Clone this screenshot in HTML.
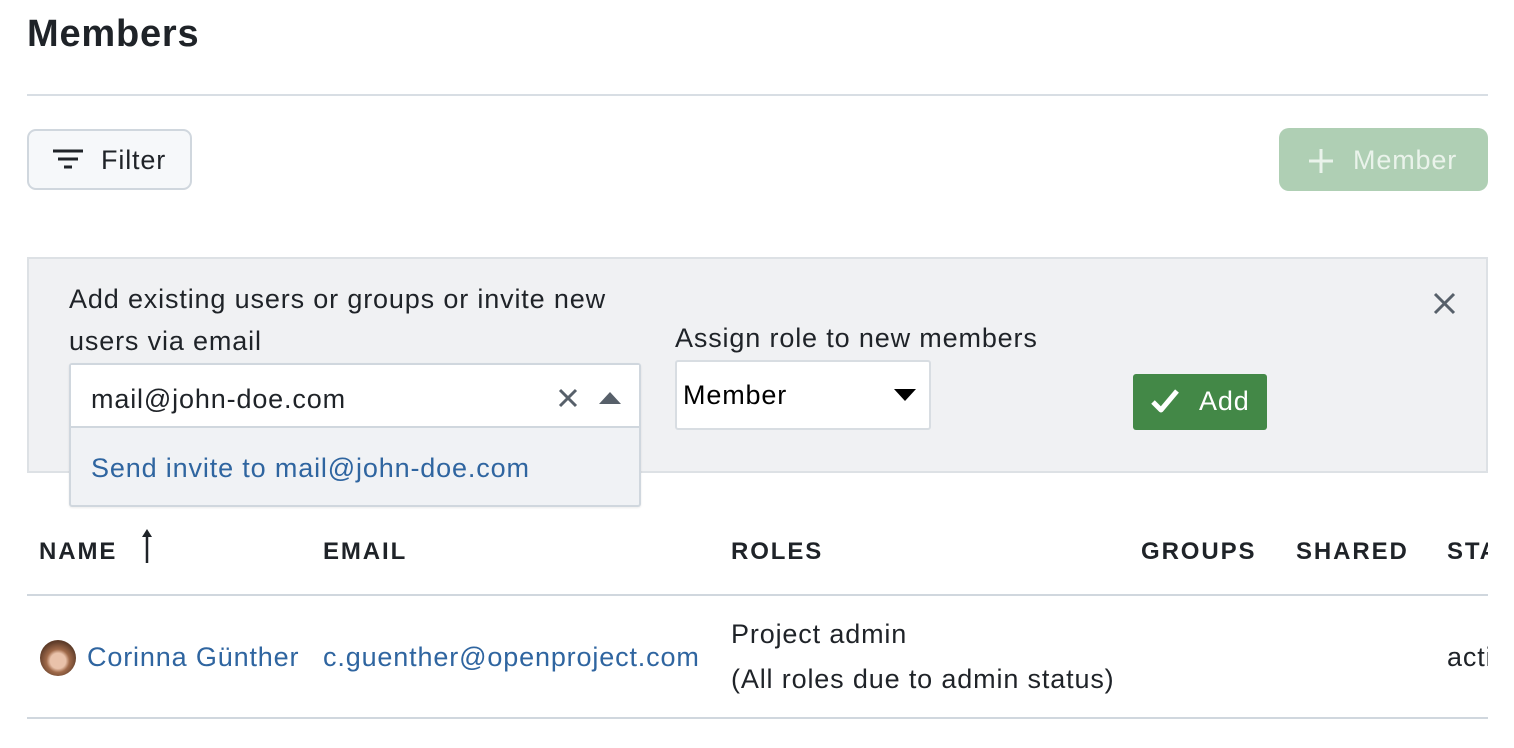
<!DOCTYPE html>
<html><head><meta charset="utf-8"><style>
*{margin:0;padding:0;box-sizing:border-box}
body{width:1514px;height:748px;background:#fff;font-family:"Liberation Sans",Arial,sans-serif;color:#1f2328;position:relative;overflow:hidden}
.a{position:absolute;white-space:nowrap}
.t{font-size:27px;line-height:30px;letter-spacing:0.85px}
.h{font-size:24px;font-weight:bold;line-height:28px;letter-spacing:1.9px}
.blue{color:#2f65a0}
</style></head><body>
<div class="a" style="left:27px;top:12px;font-size:38px;font-weight:bold;line-height:44px;letter-spacing:0.8px">Members</div>
<div class="a" style="left:27px;top:94px;width:1461px;height:2px;background:#d8dee4"></div>

<div class="a" style="left:27px;top:129px;width:165px;height:61px;border:2px solid #d0d7de;border-radius:9px;background:#f6f8fa"></div>
<svg class="a" style="left:52px;top:149px" width="32" height="22" viewBox="0 0 32 22"><path d="M1 2h30M6 10h20M12 18h8" stroke="#1f2328" stroke-width="3"/></svg>
<div class="a t" style="left:101px;top:145px">Filter</div>

<div class="a" style="left:1279px;top:128px;width:209px;height:63px;border-radius:10px;background:#afcfb4"></div>
<svg class="a" style="left:1308px;top:148px" width="26" height="26" viewBox="0 0 26 26"><path d="M13 1v24M1 13h24" stroke="#eaf3eb" stroke-width="3"/></svg>
<div class="a t" style="left:1353px;top:145px;color:#eaf3eb">Member</div>

<div class="a" style="left:27px;top:257px;width:1461px;height:216px;background:#f0f1f3;border:2px solid #dde1e5"></div>
<div class="a t" style="left:69px;top:284px">Add existing users or groups or invite new</div>
<div class="a t" style="left:69px;top:326px">users via email</div>
<div class="a" style="left:69px;top:363px;width:572px;height:144px;border:2px solid #d0d7de;border-radius:3px;background:#f0f2f5;box-shadow:0 1px 2px rgba(0,0,0,0.08)"></div>
<div class="a" style="left:71px;top:365px;width:568px;height:63px;background:#fff;border-bottom:2px solid #d0d7de"></div>
<div class="a t" style="left:91px;top:384px">mail@john-doe.com</div>
<svg class="a" style="left:558px;top:388px" width="20" height="20" viewBox="0 0 20 20"><path d="M2 2l16 16M18 2L2 18" stroke="#57606a" stroke-width="3"/></svg>
<svg class="a" style="left:599px;top:392px" width="22" height="12" viewBox="0 0 22 12"><path d="M11 0L22 12H0z" fill="#57606a"/></svg>
<div class="a t blue" style="left:91px;top:453px">Send invite to mail@john-doe.com</div>

<div class="a t" style="left:675px;top:323px">Assign role to new members</div>
<div class="a" style="left:675px;top:360px;width:256px;height:70px;background:#fff;border:2px solid #d8dde2;border-radius:3px"></div>
<div class="a t" style="left:683px;top:380px;color:#000">Member</div>
<svg class="a" style="left:894px;top:389px" width="22" height="12" viewBox="0 0 22 12"><path d="M0 0H22L11 12z" fill="#000"/></svg>

<div class="a" style="left:1133px;top:374px;width:134px;height:56px;background:#438847;border-radius:3px"></div>
<svg class="a" style="left:1150px;top:388px" width="30" height="26" viewBox="0 0 30 26"><path d="M3 14l8 8L27 3" stroke="#fff" stroke-width="5" fill="none" stroke-linejoin="round"/></svg>
<div class="a t" style="left:1199px;top:386px;color:#fff">Add</div>

<svg class="a" style="left:1433px;top:292px" width="23" height="23" viewBox="0 0 23 23"><path d="M2 2l19 19M21 2L2 21" stroke="#57606a" stroke-width="3"/></svg>

<div class="a h" style="left:39px;top:538px">NAME</div>
<svg class="a" style="left:141px;top:529px" width="12" height="36" viewBox="0 0 12 36"><path d="M6 34V6" stroke="#1f2328" stroke-width="2.5"/><path d="M6 0L11 8H1z" fill="#1f2328"/></svg>
<div class="a h" style="left:323px;top:538px">EMAIL</div>
<div class="a h" style="left:731px;top:538px">ROLES</div>
<div class="a h" style="left:1141px;top:538px">GROUPS</div>
<div class="a h" style="left:1296px;top:538px">SHARED</div>
<div class="a" style="left:1447px;top:538px;width:41px;overflow:hidden"><div class="h">STATUS</div></div>
<div class="a" style="left:27px;top:594px;width:1461px;height:2px;background:#d0d7de"></div>

<div class="a" style="left:40px;top:640px;width:36px;height:36px;border-radius:50%;background:radial-gradient(circle at 50% 58%,#e9c2aa 0 28%,#a06a4a 42%,#5e3c29 70%)"></div>
<div class="a t blue" style="left:87px;top:642px">Corinna Günther</div>
<div class="a t blue" style="left:323px;top:642px">c.guenther@openproject.com</div>
<div class="a t" style="left:731px;top:619px">Project admin</div>
<div class="a t" style="left:731px;top:664px">(All roles due to admin status)</div>
<div class="a" style="left:1447px;top:642px;width:41px;overflow:hidden"><div class="t">active</div></div>
<div class="a" style="left:27px;top:717px;width:1461px;height:2px;background:#d0d7de"></div>
</body></html>
